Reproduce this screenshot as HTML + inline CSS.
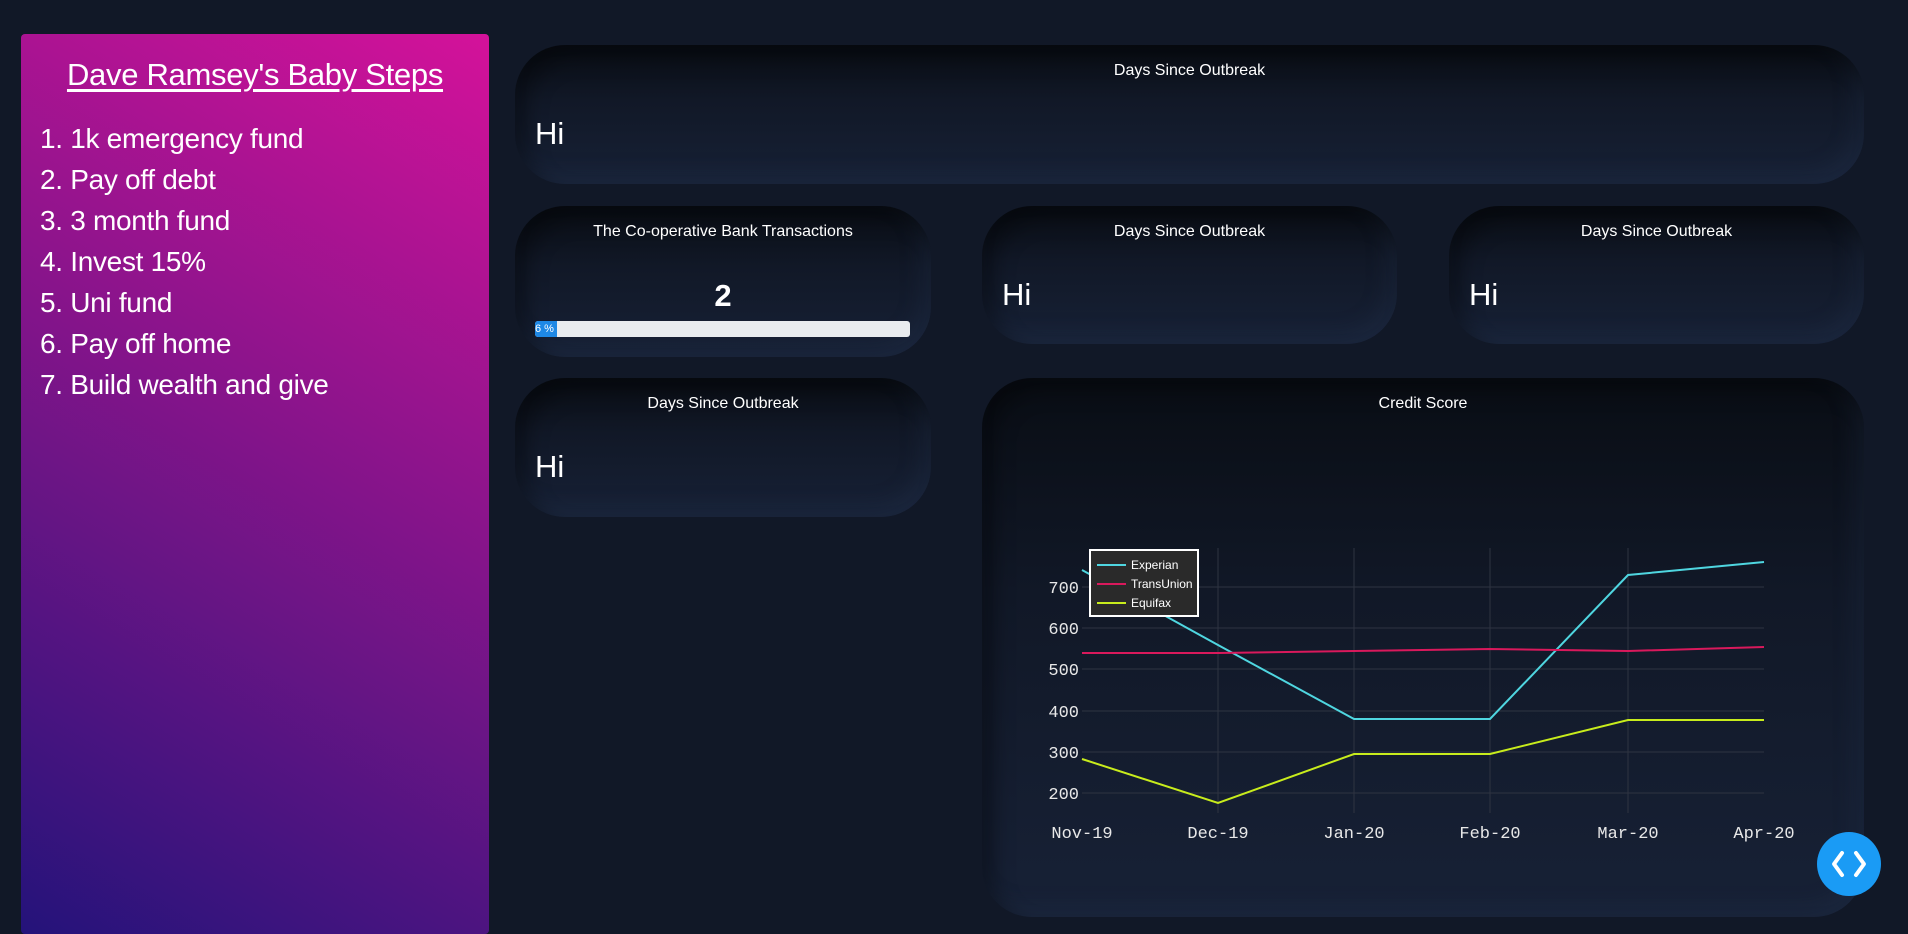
<!DOCTYPE html>
<html><head><meta charset="utf-8"><style>
*{margin:0;padding:0;box-sizing:border-box}
body{width:1908px;height:928px;background:#111827;overflow:hidden;position:relative;font-family:"Segoe UI","Liberation Sans",sans-serif;color:#fff}
.side{position:absolute;left:21px;top:34px;width:468px;height:900px;border-radius:4px;background:linear-gradient(30deg,#24137a 0%,#6a1585 40%,#d4129a 100%)}
.side h1{position:absolute;left:0;width:100%;top:22px;line-height:38px;text-align:center;font-size:31px;font-weight:normal;text-decoration:underline;text-underline-offset:4px;letter-spacing:-0.3px}
.side ol{list-style:none;position:absolute;left:19px;top:84px}
.side li{font-size:28px;height:41px;line-height:41px;letter-spacing:-0.3px}
.card{position:absolute;border-radius:50px;background:linear-gradient(180deg,#090d14 0%,#111827 40%,#172136 100%);box-shadow:inset 12px 12px 20px rgba(0,0,0,.35),inset -10px -10px 20px rgba(40,55,85,.25)}
.t{position:absolute;left:0;width:100%;text-align:center;font-size:16px;top:17px}
.hi{position:absolute;left:20px;font-size:31px}
</style></head><body>
<div class="side"><h1>Dave Ramsey's Baby Steps</h1>
<ol><li>1. 1k emergency fund</li><li>2. Pay off debt</li><li>3. 3 month fund</li><li>4. Invest 15%</li><li>5. Uni fund</li><li>6. Pay off home</li><li>7. Build wealth and give</li></ol></div>

<div class="card" style="left:515px;top:45px;width:1349px;height:139px"><div class="t">Days Since Outbreak</div><div class="hi" style="top:71px">Hi</div></div>

<div class="card" style="left:515px;top:206px;width:416px;height:151px"><div class="t">The Co-operative Bank Transactions</div>
<div style="position:absolute;left:0;width:100%;top:72px;text-align:center;font-size:31px;font-weight:bold">2</div>
<div style="position:absolute;left:20px;top:115px;width:375px;height:16px;background:#e9ecef;border-radius:3px;overflow:hidden"><div style="width:22px;height:16px;background:#1e88e5;font-size:11px;line-height:16px;color:#fff">6 %</div></div></div>

<div class="card" style="left:982px;top:206px;width:415px;height:138px"><div class="t">Days Since Outbreak</div><div class="hi" style="top:71px">Hi</div></div>
<div class="card" style="left:1449px;top:206px;width:415px;height:138px"><div class="t">Days Since Outbreak</div><div class="hi" style="top:71px">Hi</div></div>
<div class="card" style="left:515px;top:378px;width:416px;height:139px"><div class="t">Days Since Outbreak</div><div class="hi" style="top:71px">Hi</div></div>
<div class="card" style="left:982px;top:378px;width:882px;height:539px"><div class="t">Credit Score</div></div>

<svg style="position:absolute;left:0;top:0" width="1908" height="928">
<g stroke="#2e3441" stroke-width="1">
<line x1="1082" x2="1764" y1="587" y2="587"/><line x1="1082" x2="1764" y1="628" y2="628"/><line x1="1082" x2="1764" y1="669" y2="669"/><line x1="1082" x2="1764" y1="711" y2="711"/><line x1="1082" x2="1764" y1="752" y2="752"/><line x1="1082" x2="1764" y1="793" y2="793"/>
<line x1="1218" x2="1218" y1="548" y2="813"/><line x1="1354" x2="1354" y1="548" y2="813"/><line x1="1490" x2="1490" y1="548" y2="813"/><line x1="1628" x2="1628" y1="548" y2="813"/>
</g>
<g fill="none" stroke-width="2">
<polyline stroke="#4fd6e0" points="1082,570 1218,645 1354,719 1490,719 1628,575 1764,562"/>
<polyline stroke="#d9195c" points="1082,653 1218,653 1354,651 1490,649 1628,651 1764,647"/>
<polyline stroke="#c8ec1c" points="1082,759 1218,803 1354,754 1490,754 1628,720 1764,720"/>
</g>
<g font-family="Liberation Mono,monospace" font-size="17" fill="#e8e8e8" text-anchor="end">
<text x="1079" y="593">700</text><text x="1079" y="634">600</text><text x="1079" y="675">500</text><text x="1079" y="717">400</text><text x="1079" y="758">300</text><text x="1079" y="799">200</text>
</g>
<g font-family="Liberation Mono,monospace" font-size="17" fill="#e8e8e8" text-anchor="middle">
<text x="1082" y="838">Nov-19</text><text x="1218" y="838">Dec-19</text><text x="1354" y="838">Jan-20</text><text x="1490" y="838">Feb-20</text><text x="1628" y="838">Mar-20</text><text x="1764" y="838">Apr-20</text>
</g>
<rect x="1090" y="550" width="108" height="66" fill="#2a2a2a" stroke="#fff" stroke-width="2"/>
<g stroke-width="2"><line x1="1097" x2="1126" y1="565" y2="565" stroke="#4fd6e0"/><line x1="1097" x2="1126" y1="584" y2="584" stroke="#d9195c"/><line x1="1097" x2="1126" y1="603" y2="603" stroke="#c8ec1c"/></g>
<g font-family="Liberation Sans,sans-serif" font-size="12" fill="#fff"><text x="1131" y="569">Experian</text><text x="1131" y="588">TransUnion</text><text x="1131" y="607">Equifax</text></g>
<circle cx="1849" cy="864" r="32" fill="#1a9bf5"/>
<g fill="none" stroke="#fff" stroke-width="4" stroke-linecap="round" stroke-linejoin="round"><polyline points="1842,853 1834,864 1842,875"/><polyline points="1856,853 1864,864 1856,875"/></g>
</svg>
</body></html>
